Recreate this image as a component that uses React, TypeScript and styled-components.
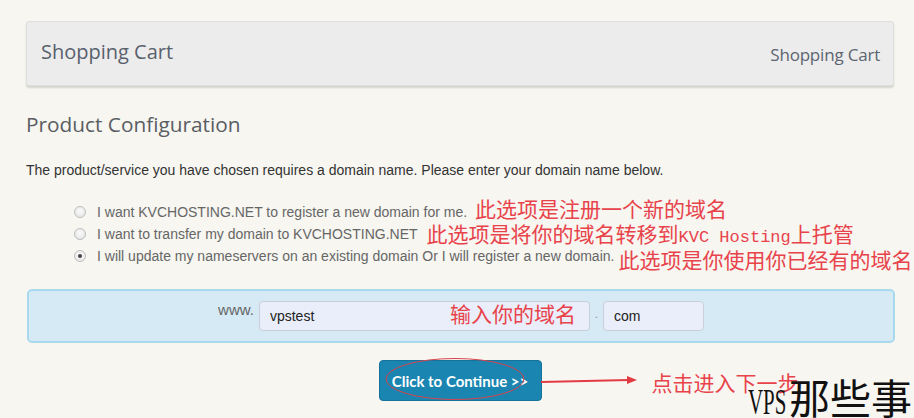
import React from 'react';
import styled, { createGlobalStyle } from 'styled-components';

const Global = createGlobalStyle`
  html, body { margin: 0; padding: 0; background: #f7f6f1; }
  body { width: 914px; height: 418px; overflow: hidden; font-family: "Liberation Sans", Arial, sans-serif; }
  * { box-sizing: border-box; }
`;

const Page = styled.div`
  position: relative;
  width: 914px;
  height: 418px;
  padding: 21px 20px 0 26px;
  overflow: hidden;
`;

const Header = styled.div`
  height: 65px;
  display: flex;
  align-items: center;
  justify-content: space-between;
  background: #ececec;
  border: 1px solid #dedede;
  border-radius: 3px;
  box-shadow: 0 2px 2px rgba(0, 0, 0, 0.14);
`;

const HeaderTitle = styled.h1`
  margin: 0 0 5px 14px;
  font-family: "Open Sans", sans-serif;
  font-weight: 400;
  font-size: 20px;
  color: #58606c;
`;

const Crumb = styled.span`
  margin: 2px 13px 0 0;
  font-family: "Open Sans", sans-serif;
  font-size: 17px;
  letter-spacing: -0.2px;
  color: #5c6470;
`;

const SectionTitle = styled.h2`
  margin: 24px 0 0;
  font-family: "Open Sans", sans-serif;
  font-weight: 400;
  font-size: 20.8px;
  line-height: 28px;
  color: #5a5d63;
`;

const Intro = styled.p`
  margin: 23px 0 0;
  font-size: 14px;
  line-height: 18px;
  color: #333;
`;

const RadioList = styled.div`
  margin-top: 22px;
  padding-left: 48px;
`;

const Row = styled.label`
  display: flex;
  align-items: center;
  height: 22px;
  white-space: nowrap;
`;

const Radio = styled.span<{ $checked?: boolean }>`
  width: 12px;
  height: 12px;
  border-radius: 50%;
  border: 1px solid #bdbdbd;
  background: radial-gradient(circle at 50% 40%, #fafafa 0%, #e2e2e2 100%);
  margin-right: 11px;
  display: flex;
  align-items: center;
  justify-content: center;
  flex: none;
  &::after {
    content: "";
    width: 4px;
    height: 4px;
    border-radius: 50%;
    background: ${(p) => (p.$checked ? '#444' : 'transparent')};
  }
`;

const Label = styled.span`
  font-size: 14px;
  color: #666;
`;

const Note = styled.span<{ $dy?: number; $ml?: number }>`
  position: relative;
  top: ${(p) => p.$dy ?? 0}px;
  margin-left: ${(p) => p.$ml ?? 7}px;
  font-family: "Noto Sans CJK SC", sans-serif;
  font-size: 21px;
  line-height: 22px;
  color: #e8434b;
`;

const Mono = styled.span`
  font-family: "Liberation Mono", monospace;
  font-size: 17px;
`;

const DomainBox = styled.div`
  margin: 22px 0 0 1px;
  width: 868px;
  height: 54px;
  border: 2px solid #a9d9ee;
  border-radius: 5px;
  background: #d5eaf5;
  display: flex;
  align-items: center;
  justify-content: center;
`;

const DomainGroup = styled.div`
  display: flex;
  align-items: flex-start;
`;

const Www = styled.span`
  font-size: 15px;
  line-height: 18px;
  color: #666;
  margin-right: 5px;
`;

const FieldWrap = styled.div`
  position: relative;
`;

const Field = styled.input<{ $w: number }>`
  display: block;
  width: ${(p) => p.$w}px;
  height: 30px;
  border: 1px solid #c9cfd8;
  border-radius: 4px;
  background: #e9eefa;
  padding: 0 0 0 10px;
  font-family: "Liberation Sans", Arial, sans-serif;
  font-size: 14px;
  color: #222;
  outline: none;
`;

const FieldNote = styled(Note)`
  position: absolute;
  left: 191px;
  top: -3px;
  margin: 0;
  line-height: 30px;
  pointer-events: none;
`;

const Dot = styled.span`
  width: 13px;
  text-align: center;
  font-size: 13px;
  line-height: 26px;
  color: #999;
`;

const ButtonRow = styled.div`
  margin-top: 17px;
  display: flex;
  justify-content: center;
`;

const ButtonWrap = styled.div`
  position: relative;
`;

const Button = styled.button`
  width: 163px;
  height: 41px;
  border: 1px solid #15729a;
  border-radius: 4px;
  background: #1985b0;
  color: #fff;
  font-family: "Lato", sans-serif;
  font-weight: 700;
  font-size: 15px;
  cursor: pointer;
`;

const Ellipse = styled.svg`
  position: absolute;
  left: 4px;
  top: -4px;
  pointer-events: none;
`;

const Arrow = styled.svg`
  position: absolute;
  left: 162px;
  top: 15px;
  pointer-events: none;
`;

const NextNote = styled(Note)`
  position: absolute;
  left: 273px;
  top: 11px;
  margin: 0;
  white-space: nowrap;
`;

const Watermark = styled.div`
  position: absolute;
  right: 2px;
  bottom: -6px;
  font-family: "Noto Sans CJK SC", serif;
  font-size: 41px;
  line-height: 44px;
  color: #111;
  white-space: nowrap;
  display: flex;
  align-items: baseline;
`;

const Latin = styled.span`
  display: inline-block;
  font-family: "Liberation Serif", serif;
  font-size: 36px;
  transform: scaleX(0.58);
  transform-origin: left;
  margin-right: -25px;
`;

export default function App() {
  return (
    <>
      <Global />
      <Page>
        <Header>
          <HeaderTitle>Shopping Cart</HeaderTitle>
          <Crumb>Shopping Cart</Crumb>
        </Header>

        <SectionTitle>Product Configuration</SectionTitle>
        <Intro>
          The product/service you have chosen requires a domain name. Please enter your domain name below.
        </Intro>

        <RadioList>
          <Row>
            <Radio />
            <Label>I want KVCHOSTING.NET to register a new domain for me.</Label>
            <Note $dy={-4} $ml={8}>此选项是注册一个新的域名</Note>
          </Row>
          <Row>
            <Radio />
            <Label>I want to transfer my domain to KVCHOSTING.NET</Label>
            <Note $dy={1} $ml={9}>
              此选项是将你的域名转移到<Mono>KVC Hosting</Mono>上托管
            </Note>
          </Row>
          <Row>
            <Radio $checked />
            <Label>I will update my nameservers on an existing domain Or I will register a new domain.</Label>
            <Note $dy={3} $ml={4}>此选项是你使用你已经有的域名</Note>
          </Row>
        </RadioList>

        <DomainBox>
          <DomainGroup>
            <Www>www.</Www>
            <FieldWrap>
              <Field $w={331} value="vpstest" readOnly />
              <FieldNote>输入你的域名</FieldNote>
            </FieldWrap>
            <Dot>.</Dot>
            <Field $w={101} value="com" readOnly />
          </DomainGroup>
        </DomainBox>

        <ButtonRow>
          <ButtonWrap>
            <Button>Click to Continue &gt;&gt;</Button>
            <Ellipse width="148" height="46" viewBox="0 0 148 46">
              <ellipse cx="72" cy="23" rx="69" ry="20.5" fill="none" stroke="#d9434d" strokeWidth="1" />
            </Ellipse>
            <Arrow width="100" height="12" viewBox="0 0 100 12">
              <line x1="0" y1="7" x2="88" y2="5" stroke="#e23a43" strokeWidth="2" />
              <polygon points="86,1 96,5 86,9" fill="#e23a43" />
            </Arrow>
            <NextNote>点击进入下一步</NextNote>
          </ButtonWrap>
        </ButtonRow>

        <Watermark>
          <Latin>VPS</Latin>那些事
        </Watermark>
      </Page>
    </>
  );
}
